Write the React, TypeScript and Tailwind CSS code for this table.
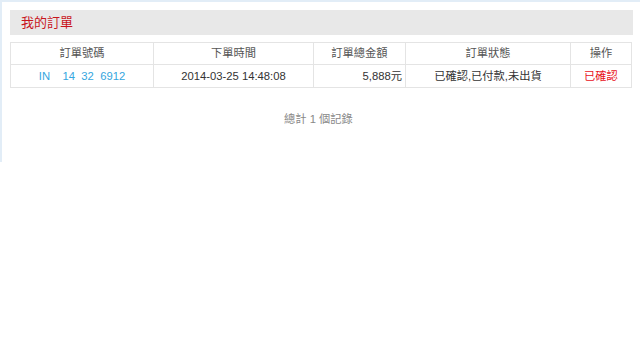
import React from "react";

const font = { fontFamily: '"Liberation Sans", "Noto Sans CJK TC", Arial, sans-serif' };

export default function App() {
  return (
    <div className="w-[640px] bg-white" style={font}>
      <div className="h-[162px] border-l-2 border-t-2 border-[#e2edf7] pl-[8px] pr-[7px] pt-[8px]">
        <div className="h-[25px] bg-[#e8e8e8] flex items-center pl-[11px]">
          <span className="text-[13px] text-[#c8161d] leading-none">我的訂單</span>
        </div>
        <table className="mt-[7px] w-[621px] border-collapse text-[11.25px] table-fixed">
          <colgroup>
            <col className="w-[143px]" />
            <col className="w-[160px]" />
            <col className="w-[92px]" />
            <col className="w-[165px]" />
            <col className="w-[61px]" />
          </colgroup>
          <thead>
            <tr className="h-[22px] text-[#555]">
              <th className="border border-[#e4e4e4] font-normal text-center">訂單號碼</th>
              <th className="border border-[#e4e4e4] font-normal text-center">下單時間</th>
              <th className="border border-[#e4e4e4] font-normal text-center">訂單總金額</th>
              <th className="border border-[#e4e4e4] font-normal text-center">訂單狀態</th>
              <th className="border border-[#e4e4e4] font-normal text-center">操作</th>
            </tr>
          </thead>
          <tbody>
            <tr className="h-[23px] text-[#333]">
              <td className="border border-[#e4e4e4] text-center text-[#34a6e0] whitespace-pre">{"IN    14  32  6912"}</td>
              <td className="border border-[#e4e4e4] text-center">2014-03-25 14:48:08</td>
              <td className="border border-[#e4e4e4] text-right pr-[3px]">5,888元</td>
              <td className="border border-[#e4e4e4] text-center">已確認,已付款,未出貨</td>
              <td className="border border-[#e4e4e4] text-center text-[#e8101a]">已確認</td>
            </tr>
          </tbody>
        </table>
        <div className="mt-[23px] text-center text-[11.25px] text-[#888] pr-[6px]">總計 1 個記錄</div>
      </div>
    </div>
  );
}
